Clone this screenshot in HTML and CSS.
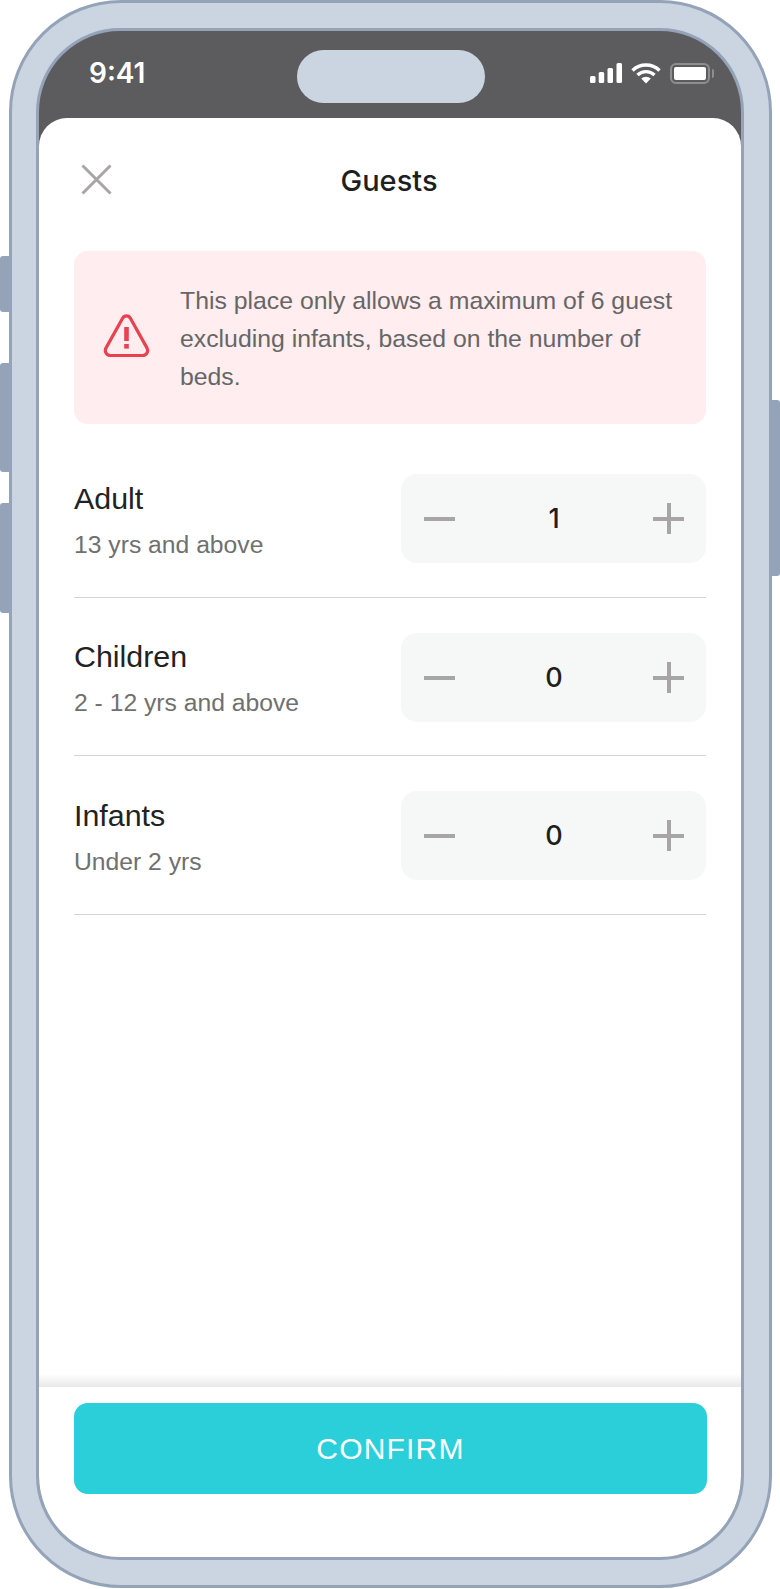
FILE: index.html
```html
<!DOCTYPE html>
<html lang="en">
<head>
    <meta charset="UTF-8">
    <meta name="viewport" content="width=device-width, initial-scale=1.0">
    <title>Guests</title>
    <link rel="stylesheet" href="styles.css">
</head>
<body>
<div class="device">
    <span class="side-btn mute"></span>
    <span class="side-btn vol-up"></span>
    <span class="side-btn vol-down"></span>
    <span class="side-btn power"></span>
    <div class="screen">
        <div class="status-bar">
            <span class="time">9:41</span>
            <span class="island"></span>
            <div class="status-icons">
                <svg width="32" height="20" viewBox="0 0 32 20"><rect x="0" y="13" width="5.5" height="7" rx="1.5"/><rect x="8.7" y="9" width="5.5" height="11" rx="1.5"/><rect x="17.5" y="5" width="5.5" height="15" rx="1.5"/><rect x="26.5" y="0" width="5.5" height="20" rx="1.5"/></svg>
                <svg width="30" height="21" viewBox="0 0 30 21"><path d="M1.5 7.5a19.5 19.5 0 0 1 27 0" fill="none" stroke="#fff" stroke-width="3.4"/><path d="M6.5 12a12.5 12.5 0 0 1 17 0" fill="none" stroke="#fff" stroke-width="3.4"/><path d="M10.2 15.6a7 7 0 0 1 9.6 0L15 20.6z"/></svg>
                <div class="battery"><span class="battery-level"></span></div>
            </div>
        </div>
        <div class="sheet">
            <div class="sheet-header">
                <svg class="close" width="31" height="31" viewBox="0 0 31 31"><path d="M1.5 1.5l28 28M29.5 1.5l-28 28" fill="none" stroke="#a8a5a6" stroke-width="3"/></svg>
                <h1 class="title">Guests</h1>
            </div>
            <div class="alert">
                <svg class="alert-icon" width="47" height="44" viewBox="0 0 47 44"><path d="M19.6 4.2L3.2 33.6C1 37.4 3.4 41.5 7.6 41.5h31.8c4.2 0 6.6-4.1 4.4-7.9L27.4 4.2c-1.8-3.2-6-3.2-7.8 0z" fill="none" stroke="#e8414f" stroke-width="3.2"/><rect x="21.2" y="13" width="4.6" height="14" fill="#e8414f"/><rect x="21.2" y="30" width="4.6" height="4.6" fill="#e8414f"/></svg>
                <p class="alert-text">This place only allows a maximum of 6 guest excluding infants, based on the number of beds.</p>
            </div>
            <div class="guest-row">
                <div class="guest-info">
                    <div class="guest-name">Adult</div>
                    <div class="guest-note">13 yrs and above</div>
                </div>
                <div class="stepper">
                    <span class="minus"></span>
                    <span class="count">1</span>
                    <span class="plus"></span>
                </div>
            </div>
            <div class="guest-row">
                <div class="guest-info">
                    <div class="guest-name">Children</div>
                    <div class="guest-note">2 - 12 yrs and above</div>
                </div>
                <div class="stepper">
                    <span class="minus"></span>
                    <span class="count">0</span>
                    <span class="plus"></span>
                </div>
            </div>
            <div class="guest-row">
                <div class="guest-info">
                    <div class="guest-name">Infants</div>
                    <div class="guest-note">Under 2 yrs</div>
                </div>
                <div class="stepper">
                    <span class="minus"></span>
                    <span class="count">0</span>
                    <span class="plus"></span>
                </div>
            </div>
            <div class="footer">
                <button class="confirm">CONFIRM</button>
            </div>
        </div>
    </div>
</div>
</body>
</html>
```

FILE: styles.css
```css
* {
    box-sizing: border-box;
    margin: 0;
    padding: 0;
}

body {
    width: 780px;
    height: 1589px;
    background-color: #fff;
    font-family: 'Liberation Sans', Arial, sans-serif;
    overflow: hidden;
}

.device {
    position: relative;
    width: 763px;
    height: 1588px;
    margin-left: 9px;
    padding: 25px 25px 25px 24px;
    background-color: #cbd5e1;
    border: 3px solid #94a3b8;
    border-radius: 112px;
}

.side-btn {
    position: absolute;
    width: 9px;
    background-color: #94a3b8;
}

.mute {
    left: -12px;
    top: 253px;
    height: 56px;
    border-radius: 3px 0 0 3px;
}

.vol-up {
    left: -12px;
    top: 360px;
    height: 109px;
    border-radius: 3px 0 0 3px;
}

.vol-down {
    left: -12px;
    top: 500px;
    height: 110px;
    border-radius: 3px 0 0 3px;
}

.power {
    right: -11px;
    top: 397px;
    height: 176px;
    border-radius: 0 3px 3px 0;
}

.screen {
    display: flex;
    flex-direction: column;
    height: 100%;
    background-color: #5c5c5e;
    border: 3px solid #94a3b8;
    border-radius: 84px;
    overflow: hidden;
}

.status-bar {
    position: relative;
    display: flex;
    align-items: center;
    justify-content: space-between;
    flex: none;
    height: 87px;
    padding: 0 31px 3px 50px;
    color: #fff;
}

.time {
    font-family: Inter, sans-serif;
    font-size: 28px;
    font-weight: 600;
}

.island {
    position: absolute;
    left: 50%;
    top: 19px;
    width: 188px;
    height: 53px;
    margin-left: -93px;
    background-color: #cbd5e1;
    border-radius: 27px;
}

.status-icons {
    display: flex;
    align-items: center;
    gap: 9px;
}

.status-icons svg {
    fill: #fff;
}

.battery {
    position: relative;
    width: 40px;
    height: 21px;
    padding: 2px;
    border: 2px solid #8e8e8f;
    border-radius: 6px;
}

.battery::after {
    content: '';
    position: absolute;
    right: -6px;
    top: 4px;
    width: 2px;
    height: 9px;
    background-color: #8e8e8f;
    border-radius: 0 2px 2px 0;
}

.battery-level {
    display: block;
    height: 100%;
    background-color: #fff;
    border-radius: 2px;
}

.sheet {
    position: relative;
    display: flex;
    flex-direction: column;
    flex: 1;
    padding: 0 35px;
    background-color: #fff;
    border-radius: 28px 28px 0 0;
}

.sheet-header {
    position: relative;
    display: flex;
    align-items: center;
    justify-content: center;
    height: 124px;
    margin-bottom: 9px;
    padding-right: 2px;
}

.close {
    position: absolute;
    left: 7px;
    top: 46px;
}

.title {
    font-family: Inter, sans-serif;
    font-size: 29px;
    font-weight: 500;
    color: #1f1f1f;
}

.alert {
    display: flex;
    align-items: center;
    height: 173px;
    margin-bottom: 15px;
    padding: 0 28px 0 29px;
    background-color: #ffedef;
    border-radius: 14px;
}

.alert-icon {
    flex: none;
    margin: -4px 30px 0 0;
}

.alert-text {
    padding-top: 2px;
    font-size: 24.8px;
    line-height: 38px;
    color: #666;
}

.guest-row {
    display: flex;
    align-items: center;
    justify-content: space-between;
    height: 158.5px;
    padding-top: 2px;
    border-bottom: 1px solid #d4d4d4;
}

.guest-info {
    padding-top: 2px;
}

.guest-name {
    font-size: 30.4px;
    color: #222;
    margin-bottom: 15px;
}

.guest-note {
    font-size: 24.7px;
    color: #707070;
}

.stepper {
    display: flex;
    align-items: center;
    justify-content: space-between;
    width: 305px;
    height: 89px;
    padding: 0 22px 0 23px;
    background-color: #f6f7f7;
    border-radius: 16px;
}

.minus,
.plus {
    position: relative;
    width: 31px;
    height: 31px;
}

.minus::before,
.plus::before {
    content: '';
    position: absolute;
    left: 0;
    top: 14px;
    width: 31px;
    height: 4px;
    background-color: #a8a5a6;
}

.plus::after {
    content: '';
    position: absolute;
    left: 14px;
    top: 0;
    width: 4px;
    height: 31px;
    background-color: #a8a5a6;
}

.count {
    font-family: Inter, sans-serif;
    font-size: 27px;
    font-weight: 500;
    color: #1f1f1f;
}

.footer {
    position: relative;
    margin: auto -35px 0;
    padding: 16px 34px 0 35px;
    height: 170px;
}

.footer::before {
    content: '';
    position: absolute;
    left: 0;
    right: 0;
    top: -13px;
    height: 13px;
    background: linear-gradient(to bottom, rgba(0, 0, 0, 0), rgba(0, 0, 0, 0.09));
}

.confirm {
    display: block;
    width: 100%;
    height: 91px;
    background-color: #2bcfda;
    border: none;
    border-radius: 14px;
    color: #fff;
    font-family: 'Liberation Sans', Arial, sans-serif;
    font-size: 30px;
    letter-spacing: 1.2px;
}
```
